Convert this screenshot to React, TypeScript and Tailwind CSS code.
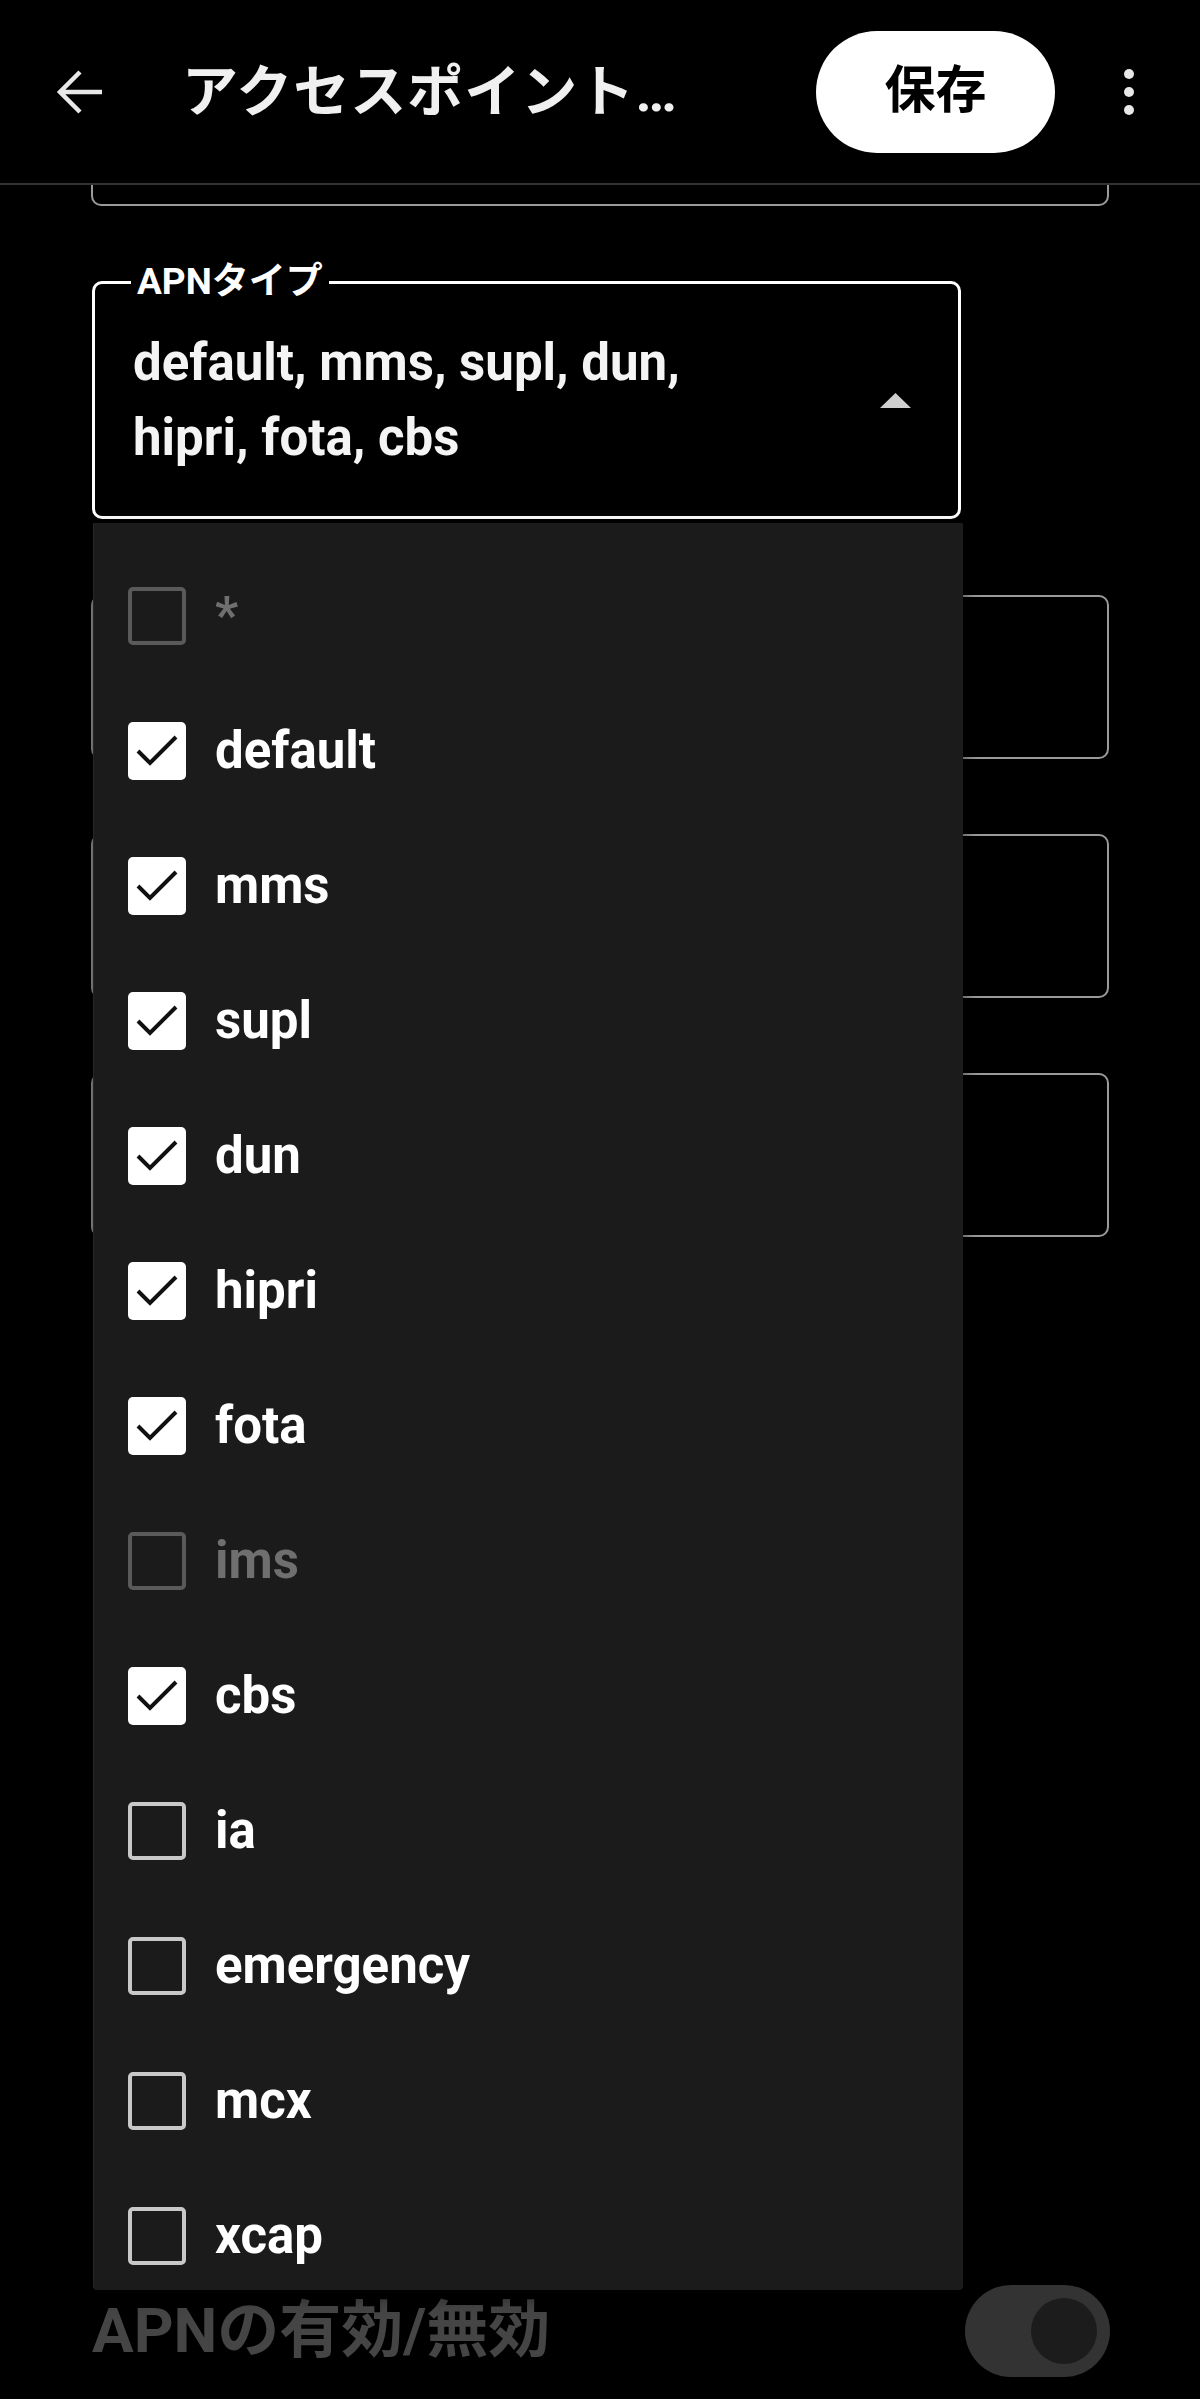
import React from 'react';

type Opt = { label: string; checked: boolean; disabled?: boolean };

const OPTIONS: Opt[] = [
  { label: '*', checked: false, disabled: true },
  { label: 'default', checked: true },
  { label: 'mms', checked: true },
  { label: 'supl', checked: true },
  { label: 'dun', checked: true },
  { label: 'hipri', checked: true },
  { label: 'fota', checked: true },
  { label: 'ims', checked: false, disabled: true },
  { label: 'cbs', checked: true },
  { label: 'ia', checked: false },
  { label: 'emergency', checked: false },
  { label: 'mcx', checked: false },
  { label: 'xcap', checked: false },
];

const Checkbox: React.FC<{ checked: boolean; disabled?: boolean }> = ({ checked, disabled }) => {
  if (checked) {
    return (
      <div className="w-[58px] h-[58px] shrink-0 rounded-[5px] bg-white flex items-center justify-center">
        <svg width="58" height="58" viewBox="0 0 58 58">
          <path d="M10 29 L22 41 L48 15" fill="none" stroke="#111" strokeWidth="4" />
        </svg>
      </div>
    );
  }
  return (
    <div
      className={
        disabled
          ? 'w-[58px] h-[58px] shrink-0 rounded-[5px] border-[4px] border-[#5a5a5a]'
          : 'w-[58px] h-[58px] shrink-0 rounded-[5px] border-[4px] border-[#c8c8c8]'
      }
    />
  );
};

export default function App() {
  return (
    <div className="relative w-[1200px] h-[2399px] bg-black overflow-hidden font-[Roboto,'Noto_Sans_CJK_JP',sans-serif] text-white">
      {/* app bar */}
      <div className="h-[185px] flex items-center border-b-2 border-[#333]">
        <svg className="ml-[56px] shrink-0" width="48" height="52" viewBox="0 0 48 52">
          <path d="M46 26 H5 M24 6 L4 26 L24 46" fill="none" stroke="#e8e8e8" strokeWidth="4.5" />
        </svg>
        <div className="ml-[78px] text-[56px] font-bold leading-none text-[#f0f0f0] tracking-[1px]">アクセスポイント…</div>
        <button className="ml-auto w-[239px] h-[122px] rounded-full bg-white text-black text-[51px] font-bold flex items-center justify-center">
          保存
        </button>
        <div className="w-[145px] flex flex-col items-center gap-[8px] pl-[2px]">
          <span className="w-[10px] h-[10px] rounded-full bg-[#e8e8e8]" />
          <span className="w-[10px] h-[10px] rounded-full bg-[#e8e8e8]" />
          <span className="w-[10px] h-[10px] rounded-full bg-[#e8e8e8]" />
        </div>
      </div>

      {/* bottom of the field above, scrolled under the bar */}
      <div className="ml-[91px] w-[1018px] h-[21px] border-x-2 border-b-2 border-[#9a9a9a] rounded-b-[10px]" />

      {/* APN type field (focused) */}
      <div className="relative mt-[75px] ml-[92px] w-[869px] h-[238px] border-[3px] border-white rounded-[10px] flex items-center pl-[38px] pr-[47px]">
        <span className="absolute left-[36px] top-[-23px] bg-black px-[6px] text-[37px] leading-[42px] font-bold">APNタイプ</span>
        <div className="flex-1 text-[51px] leading-[75px] font-bold text-[#f4f4f4]">
          <div>default, mms, supl, dun,</div>
          <div>hipri, fota, cbs</div>
        </div>
        <svg width="31" height="15" viewBox="0 0 31 15">
          <path d="M15.5 0 L31 15 L0 15 Z" fill="#cfcfcf" />
        </svg>
      </div>

      {/* further fields behind the menu */}
      <div className="mt-[76px] ml-[91px] w-[1018px] flex flex-col gap-[75px]">
        <div className="h-[164px] border-2 border-[#9a9a9a] rounded-[10px]" />
        <div className="h-[164px] border-2 border-[#9a9a9a] rounded-[10px]" />
        <div className="h-[164px] border-2 border-[#9a9a9a] rounded-[10px]" />
      </div>

      {/* enable toggle */}
      <div className="mt-[1048px] h-[92px] flex items-center justify-between pl-[92px] pr-[90px]">
        <span className="text-[62px] font-bold text-[#454545] leading-none">APNの有効/無効</span>
        <div className="w-[145px] h-[92px] rounded-full bg-[#333] flex items-center justify-end pr-[13px]">
          <div className="w-[66px] h-[66px] rounded-full bg-[#1c1c1c]" />
        </div>
      </div>

      {/* dropdown menu */}
      <div className="absolute left-[93px] top-[523px] w-[870px] h-[1767px] bg-[#1b1b1b] rounded-b-[4px] overflow-hidden border-l border-[#262626] shadow-[0_6px_16px_rgba(0,0,0,0.6)] pt-[25px]">
        {OPTIONS.map((o) => (
          <div key={o.label} className="h-[135px] flex items-center pl-[34px] gap-[29px]">
            <Checkbox checked={o.checked} disabled={o.disabled} />
            <span
              className={
                o.disabled
                  ? 'text-[51px] font-bold text-[#6f6f6f] leading-none'
                  : 'text-[51px] font-bold text-white leading-none'
              }
            >
              {o.label}
            </span>
          </div>
        ))}
      </div>
    </div>
  );
}
